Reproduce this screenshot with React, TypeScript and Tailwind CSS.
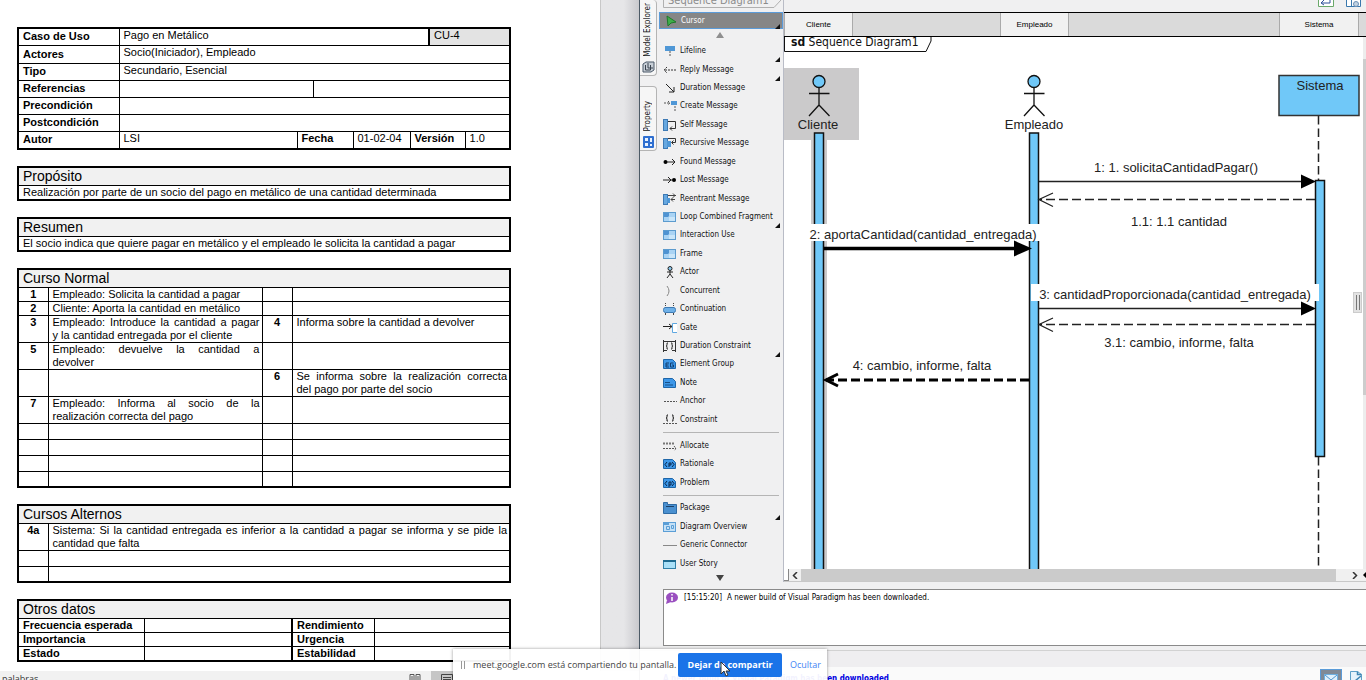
import type { ReactNode } from "react";

const UI_FONT = "font-['DejaVu_Sans_Condensed','DejaVu_Sans',sans-serif]";

/* ---------- Document ---------- */

function Heading({ children, span }: { children: ReactNode; span: number }) {
  return (
    <tr className="h-[18px] border-b border-black bg-[#f1f1f1]">
      <th colSpan={span} className="p-0 pl-1 text-left text-sm leading-4 font-normal">
        {children}
      </th>
    </tr>
  );
}

function DocTable({ cols, children }: { cols: string[]; children: ReactNode }) {
  return (
    <table className="w-full table-fixed border-collapse border-2 border-black text-[11px] leading-[13px]">
      <colgroup>
        {cols.map((c, i) => (
          <col key={i} className={c} />
        ))}
      </colgroup>
      <tbody>{children}</tbody>
    </table>
  );
}

const label = "border border-black p-0 pl-1 text-left align-middle font-bold";
const cell = "border border-black p-0 px-1 align-top";
const num = "border border-black p-0 text-center align-top font-bold";
const just = "border border-black p-0 pl-1 pr-[2px] text-justify align-top";

const steps: { h: string; a?: string; at?: string; b?: string; bt?: string }[] = [
  { h: "h-[14px]", a: "1", at: "Empleado: Solicita la cantidad a pagar" },
  { h: "h-[14px]", a: "2", at: "Cliente: Aporta la cantidad en metálico" },
  {
    h: "h-[27px]",
    a: "3",
    at: "Empleado: Introduce la cantidad a pagar y\u00a0la cantidad entregada por el cliente",
    b: "4",
    bt: "Informa sobre la cantidad a devolver",
  },
  { h: "h-[27px]", a: "5", at: "Empleado: devuelve la cantidad a devolver" },
  { h: "h-[27px]", b: "6", bt: "Se informa sobre la realización correcta del\u00a0pago por parte del socio" },
  { h: "h-[27px]", a: "7", at: "Empleado: Informa al socio de la realización correcta del pago" },
  { h: "h-[16px]" },
  { h: "h-[16px]" },
  { h: "h-[16px]" },
  { h: "h-[16px]" },
];

function Document() {
  return (
    <section className="flex w-[639px] shrink-0 flex-col bg-[#e4e4e6] font-['Liberation_Sans',Arial,sans-serif] text-black">
      <div className="flex min-h-0 flex-1">
        <div className="w-[601px] border-r border-[#c8c8c8] bg-white pt-[27px] pl-[17px]">
          <div className="flex w-[494px] flex-col gap-4">
            <DocTable
              cols={["w-[101px]", "w-[178px]", "w-[16px]", "w-[40px]", "w-[57px]", "w-[19px]", "w-[36px]", "w-[45px]"]}
            >
              <tr className="h-[17px]">
                <th className={label}>Caso de Uso</th>
                <td className={cell} colSpan={5}>
                  Pago en Metálico
                </td>
                <td className="border border-l-2 border-black bg-[#e3e3e3] p-0 pl-1 align-top" colSpan={2}>
                  CU-4
                </td>
              </tr>
              <tr className="h-[18px]">
                <th className={label}>Actores</th>
                <td className={cell} colSpan={7}>
                  Socio(Iniciador), Empleado
                </td>
              </tr>
              <tr className="h-[17px]">
                <th className={label}>Tipo</th>
                <td className={cell} colSpan={7}>
                  Secundario, Esencial
                </td>
              </tr>
              <tr className="h-[17px]">
                <th className={label}>Referencias</th>
                <td className={cell} colSpan={2} />
                <td className={cell} colSpan={5} />
              </tr>
              <tr className="h-[17px]">
                <th className={label}>Precondición</th>
                <td className={cell} colSpan={7} />
              </tr>
              <tr className="h-[17px]">
                <th className={label}>Postcondición</th>
                <td className={cell} colSpan={7} />
              </tr>
              <tr className="h-[18px]">
                <th className={label}>Autor</th>
                <td className={cell}>LSI</td>
                <th className={`${cell} text-left`} colSpan={2}>
                  Fecha
                </th>
                <td className={cell}>01-02-04</td>
                <th className={`${cell} text-left`} colSpan={2}>
                  Versión
                </th>
                <td className={cell}>1.0</td>
              </tr>
            </DocTable>

            <DocTable cols={["w-full"]}>
              <Heading span={1}>Propósito</Heading>
              <tr className="h-[15px]">
                <td className={cell}>
                  Realización por parte de un socio del pago en metálico de una cantidad determinada
                </td>
              </tr>
            </DocTable>

            <DocTable cols={["w-full"]}>
              <Heading span={1}>Resumen</Heading>
              <tr className="h-[15px]">
                <td className={cell}>
                  El socio indica que quiere pagar en metálico y el empleado le solicita la cantidad a pagar
                </td>
              </tr>
            </DocTable>

            <DocTable cols={["w-[30px]", "w-[214px]", "w-[30px]", "w-[218px]"]}>
              <Heading span={4}>Curso Normal</Heading>
              {steps.map((s, i) => (
                <tr key={i} className={s.h}>
                  <td className={num}>{s.a}</td>
                  <td className={just}>{s.at}</td>
                  <td className={num}>{s.b}</td>
                  <td className={just}>{s.bt}</td>
                </tr>
              ))}
            </DocTable>

            <DocTable cols={["w-[30px]", "w-[462px]"]}>
              <Heading span={2}>Cursos Alternos</Heading>
              <tr className="h-[27px]">
                <td className={num}>4a</td>
                <td className={just}>
                  Sistema: Si la cantidad entregada es inferior a la cantidad a pagar se informa y se pide la cantidad
                  que falta
                </td>
              </tr>
              <tr className="h-[16px]">
                <td className={num} />
                <td className={just} />
              </tr>
              <tr className="h-[16px]">
                <td className={num} />
                <td className={just} />
              </tr>
            </DocTable>

            <DocTable cols={["w-[126px]", "w-[148px]", "w-[82px]", "w-[136px]"]}>
              <Heading span={4}>Otros datos</Heading>
              {[
                ["Frecuencia esperada", "Rendimiento"],
                ["Importancia", "Urgencia"],
                ["Estado", "Estabilidad"],
              ].map(([a, b]) => (
                <tr key={a} className="h-[14px]">
                  <th className={label}>{a}</th>
                  <td className={cell} />
                  <th className={`${label} border-l-2`}>{b}</th>
                  <td className={cell} />
                </tr>
              ))}
            </DocTable>
          </div>
        </div>
        <div className="flex-1 bg-linear-to-r from-[#e6e6e8] from-60% to-[#c9c9cd]" />
      </div>
      <div className="flex h-[9px] justify-between overflow-hidden bg-[#f1f1f1] pl-[2px] text-[9px] leading-[15px]">
        <span className="font-['Open_Sans',sans-serif] text-[#333]">palabras</span>
        <div className="mr-[186px] flex gap-[10px]">
          <svg width="12" height="9" className="mt-[3px]" fill="none" stroke="#555">
            <path d="M1 .5h4v8H1zM7 .5h4v8H7zM2 3h2M2 5h2M8 3h2M8 5h2" />
          </svg>
          <div className="w-[22px] bg-[#c6c6c6] pt-[3px] pl-[10px]">
            <svg width="12" height="9" fill="none" stroke="#444">
              <path d="M.5 .5h11v9H.5zM2 3.5h8M2 5.5h8" />
            </svg>
          </div>
        </div>
      </div>
    </section>
  );
}

/* ---------- Palette ---------- */

const blueBox = (
  <>
    <rect x=".5" y="1.5" width="12" height="9" fill="#a9d3f4" stroke="#5c9bce" />
    <path d="M1 2h5v3l-1 1H1z" fill="#4f93d2" />
    <path d="M6 6h6v4H6z" fill="#c9e5f9" />
  </>
);

const noteShape = <path d="M.5 1.5h9l3 3v6H.5z" fill="#3d97e8" stroke="#1f66a8" />;

const icons: Record<string, ReactNode> = {
  Lifeline: (
    <>
      <rect x="2" y="1" width="10" height="5" fill="#4f97d6" />
      <path d="M7 6v5" stroke="#555" strokeDasharray="2 1" />
    </>
  ),
  "Reply Message": (
    <path d="M4 3L1 6l3 3M2 6h12" fill="none" stroke="#333" strokeDasharray="2 1" />
  ),
  "Duration Message": <path d="M3 2l8 8M11 5v5H6" fill="none" stroke="#222" />,
  "Create Message": (
    <>
      <rect x="8" y="1" width="6" height="4" fill="#4f97d6" />
      <path d="M1 3h6M5 1l2 2-2 2M12 6v6" fill="none" stroke="#555" strokeDasharray="2 1" />
    </>
  ),
  "Self Message": (
    <>
      <rect x=".5" y=".5" width="4" height="11" fill="#67a8e0" stroke="#3d7ab5" />
      <path d="M5 2.500h7.500v7H7M9 7.500l-2 2 2 2" fill="none" stroke="#333" />
    </>
  ),
  "Recursive Message": (
    <>
      <rect x=".5" y="1.500" width="4" height="10" fill="#67a8e0" stroke="#3d7ab5" />
      <rect x="4" y="4" width="4" height="6" fill="#4f97d6" />
      <path d="M5 1.500h7.500v4H9M10.500 3.500l-2 2 2 2" fill="none" stroke="#333" />
    </>
  ),
  "Found Message": (
    <>
      <circle cx="2.500" cy="6" r="2" />
      <path d="M4 6h8M9 3l3 3-3 3" fill="none" stroke="#222" />
    </>
  ),
  "Lost Message": (
    <>
      <circle cx="11" cy="6" r="2" />
      <path d="M0 6h9M5 3l3 3-3 3" fill="none" stroke="#222" />
    </>
  ),
  "Reentrant Message": (
    <>
      <rect x=".5" y="1.500" width="4" height="10" fill="#67a8e0" stroke="#3d7ab5" />
      <rect x="4" y="5" width="3" height="5" fill="#4f97d6" />
      <path d="M5 2.500h8M10 .5l2 2-2 2M12 6.500H8M10 4.500l-2 2 2 2" fill="none" stroke="#444" />
    </>
  ),
  "Loop Combined Fragment": blueBox,
  "Interaction Use": blueBox,
  Frame: blueBox,
  Actor: (
    <>
      <circle cx="7" cy="2.500" r="2" fill="#8cc9ee" stroke="#222" />
      <path d="M7 5v3M4 6h6M7 8l-3 4M7 8l3 4" fill="none" stroke="#222" />
    </>
  ),
  Concurrent: <path d="M4 1q4 5 0 10" fill="none" stroke="#888" />,
  Continuation: (
    <>
      <path d="M2.500 0v5M10.500 0v5" stroke="#444" strokeDasharray="1 1" />
      <rect x=".5" y="4.500" width="12" height="5" rx="2" fill="#6fb1e8" stroke="#3d7ab5" />
      <path d="M2.500 10v2M10.500 10v2" stroke="#444" />
    </>
  ),
  Gate: (
    <>
      <path d="M0 4.500h9M6 2l3 2.500L6 7" fill="none" stroke="#222" />
      <path d="M14 1.500H9.500v9H14" fill="#fff" stroke="#5ea7e0" />
    </>
  ),
  "Duration Constraint": (
    <path
      d="M.5 0v12M12.500 0v12M1 1.500h11M1 10.500h3M9 10.500h3M5 3H4v2.500L3 6l1 .5V9h1M8 3h1v2.500l1 .5-1 .5V9H8"
      fill="none"
      stroke="#333"
    />
  ),
  "Element Group": (
    <>
      {noteShape}
      <path d="M6 5H3v4h3M3 7h2.500M10.500 5h-3v4h3V7H9" fill="none" stroke="#123f70" />
    </>
  ),
  Note: (
    <>
      {noteShape}
      <path d="M2 5.500h5M2 8h8" stroke="#174f87" />
    </>
  ),
  Anchor: <path d="M1 6.500h13" stroke="#555" strokeDasharray="2 1" />,
  Constraint: (
    <>
      <path d="M5 1H4v2.500L3 4l1 .5V7h1M9 1h1v2.500l1 .5-1 .5V7H9" fill="none" stroke="#222" />
      <path d="M0 9.500h14" stroke="#555" strokeDasharray="2 1" />
    </>
  ),
  Allocate: (
    <>
      <path d="M0 3.500h11" stroke="#777" strokeWidth="2" strokeDasharray="2 1" />
      <path d="M0 8.500h13M11 6l2 2.500-2 2" fill="none" stroke="#555" strokeDasharray="2 1" />
    </>
  ),
  Rationale: (
    <>
      {noteShape}
      <path d="M4 4L2 6.500 4 9M9 4l2 2.500L9 9M6 9V5h2v2H6" fill="none" stroke="#06254a" />
    </>
  ),
  Problem: (
    <>
      {noteShape}
      <path d="M4 4L2 6.500 4 9M9 4l2 2.500L9 9M6 10V5h2v3H6" fill="none" stroke="#06254a" />
    </>
  ),
  Package: (
    <>
      <path d="M.5 .5h4v2h9v9H.5z" fill="#4a90d0" stroke="#2e6ba5" />
      <path d="M3 4.500h8" stroke="#1b3f66" />
    </>
  ),
  "Diagram Overview": (
    <>
      <rect x=".5" y="1.500" width="12" height="9" fill="#c4e0f6" stroke="#5b9ed6" />
      <path d="M1 2h5v2H1z" fill="#5b9ed6" />
      <path d="M3.500 5.500h3v3h-3zM8.500 4.500h2v3h-2z" fill="none" stroke="#5b9ed6" />
    </>
  ),
  "Generic Connector": <path d="M0 6.500h14" stroke="#888" />,
  "User Story": (
    <>
      <rect x=".5" y="2.500" width="12" height="8" fill="#a9e0f8" stroke="#3180a8" />
      <path d="M0 3h13" stroke="#1d6a90" strokeWidth="2" />
    </>
  ),
};

const withMenu = ["Lifeline", "Reply Message", "Loop Combined Fragment", "Duration Constraint", "Package"];

const groupA = [
  "Lifeline",
  "Reply Message",
  "Duration Message",
  "Create Message",
  "Self Message",
  "Recursive Message",
  "Found Message",
  "Lost Message",
  "Reentrant Message",
  "Loop Combined Fragment",
  "Interaction Use",
  "Frame",
  "Actor",
  "Concurrent",
  "Continuation",
  "Gate",
  "Duration Constraint",
  "Element Group",
  "Note",
  "Anchor",
  "Constraint",
];
const groupB = ["Allocate", "Rationale", "Problem"];
const groupC = ["Package", "Diagram Overview", "Generic Connector", "User Story"];

function Tools({ names, height }: { names: string[]; height: string }) {
  return (
    <ul className={`flex flex-col ${height}`}>
      {names.map((n) => (
        <li key={n} className="relative flex-1">
          <button type="button" className="flex h-full w-full items-center gap-[3px] pl-1 whitespace-nowrap">
            <svg width="14" height="12" className="shrink-0">
              {icons[n]}
            </svg>
            {n}
          </button>
          {withMenu.includes(n) && (
            <svg width="5" height="5" className="absolute right-[3px] -bottom-[2px]">
              <path d="M5 0v5H0z" fill="#111" />
            </svg>
          )}
        </li>
      ))}
    </ul>
  );
}

function Palette() {
  return (
    <div className="flex w-[125px] shrink-0 flex-col border-r border-[#b9bcc6] text-[8px] leading-3 text-[#111]">
      <div className="relative h-3 overflow-hidden">
        <div className="flex h-2 items-end pl-[9px] text-[11px] leading-[14px] whitespace-nowrap text-[#8b8b8b]">
          Sequence Diagram1
        </div>
        <svg width="120" height="8" className="absolute top-0 left-1" fill="none" stroke="#b0b0b0">
          <path d="M.5 0v7.500H111l7-7.500" />
        </svg>
      </div>
      <div className="relative">
        <button
          type="button"
          className="flex h-[17px] w-full items-center gap-[5px] border border-[#5b9bd8] bg-[#868686] pl-[6px] text-white"
        >
          <svg width="10" height="12">
            <path d="M1 1l9 6-5 1-3 3z" fill="#3fae49" stroke="#1f7a2b" />
          </svg>
          Cursor
        </button>
        <svg width="5" height="5" className="absolute right-[3px] bottom-0">
          <path d="M5 0v5H0z" fill="#111" />
        </svg>
      </div>
      <svg width="8" height="6" className="mt-[3px] mb-[4px] ml-[57px]">
        <path d="M4 0l4 6H0z" fill="#8f8f8f" />
      </svg>
      <Tools names={groupA} height="h-[387px]" />
      <hr className="mt-[3px] mb-1 ml-1 w-[116px] border-[#b5b5b5]" />
      <Tools names={groupB} height="h-[55px]" />
      <hr className="my-[3px] ml-1 w-[116px] border-[#b5b5b5]" />
      <Tools names={groupC} height="h-[74px]" />
      <svg width="8" height="6" className="mt-[2px] ml-[57px]">
        <path d="M0 0h8L4 6z" fill="#444" />
      </svg>
    </div>
  );
}

function SideTabs() {
  const tab =
    "flex w-[17px] flex-col items-center justify-end gap-1 rounded-r border border-l-0 border-[#b4b4b4] bg-[#f6f6f6] text-[8px] leading-3 text-[#111]";
  return (
    <div className="flex w-[19px] shrink-0 flex-col gap-[10px]">
      <button type="button" className={`${tab} h-[76px] border-t-0 pb-[2px]`}>
        <span className="rotate-180 whitespace-nowrap [writing-mode:vertical-rl]">Model Explorer</span>
        <svg width="13" height="12" className="shrink-0">
          <path d="M1 3l3-2h8v8l-3 2H1z" fill="#c7ced6" stroke="#4b5868" />
          <path d="M3.500 4v5h5V4M6 2v5h5" fill="none" stroke="#39424e" />
        </svg>
      </button>
      <button type="button" className={`${tab} h-[65px] pb-[1px]`}>
        <span className="rotate-180 whitespace-nowrap [writing-mode:vertical-rl]">Property</span>
        <svg width="13" height="14" className="shrink-0">
          <rect x="1" y="1" width="11" height="12" rx="1" fill="#2f6fd0" />
          <path d="M3 3h3v3H3zM8 3h2v4H8zM3 8h3v3H3zM8 9h2v2H8z" fill="#e8f2ff" />
        </svg>
      </button>
    </div>
  );
}

/* ---------- Sequence diagram ---------- */

function StickFigure({ x }: { x: number }) {
  return (
    <g stroke="#111" strokeWidth="1.300" fill="none">
      <circle cx={x} cy="44.500" r="6" fill="#70c8f8" />
      <path d={`M${x} 51v17M${x - 10} 56.500h20.500M${x} 68l-10 11M${x} 68l10.500 11`} />
    </g>
  );
}

function Diagram() {
  return (
    <svg
      className="block h-full w-full min-w-0 font-['Liberation_Sans',Arial,sans-serif] text-[13px]"
      fill="#222"
      textAnchor="middle"
    >
      <path d="M.5 0v14.500H142L147 4V0" fill="#fff" stroke="#111" />
      <text x="7" y="9" textAnchor="start" className={`${UI_FONT} text-xs`} fill="#111">
        <tspan fontWeight="bold">sd</tspan> Sequence Diagram1
      </text>

      <rect x="0" y="31" width="75" height="72" fill="#cbcacb" />
      <rect x="27" y="95" width="16" height="100%" fill="#cbcacb" />
      <StickFigure x={35} />
      <StickFigure x={250} />
      <text x="34" y="92">Cliente</text>
      <text x="250" y="92">Empleado</text>
      <g fill="#70c8f8" stroke="#111" strokeWidth="1.500">
        <rect x="30.500" y="96" width="9" height="100%" />
        <rect x="245.500" y="96" width="9" height="100%" />
      </g>

      <path d="M534.500 79V143M534.500 420V560" stroke="#222" strokeWidth="1.500" strokeDasharray="8.500 4" />
      <rect x="495" y="38.500" width="80" height="40" fill="#70c8f8" stroke="#333" strokeWidth="1.500" />
      <text x="536" y="53">Sistema</text>
      <rect x="531.500" y="143.500" width="9" height="276" fill="#70c8f8" stroke="#111" strokeWidth="1.500" />

      <rect x="27" y="187" width="229" height="17" fill="#fff" />
      <rect x="247" y="247" width="288" height="17" fill="#fff" />

      <g stroke="#222" fill="none" strokeWidth="1.300">
        <path d="M255 144.500h264M255 271.500h264" />
        <path d="M531 162.500H256M531 287.500H256" strokeDasharray="9 4" />
        <path d="M269 156l-14 6.500 14 7M269 281l-14 6.500 14 7" />
      </g>
      <path d="M517 137.500l15 7-15 7zM517 264.500l15 7-15 7z" fill="#000" />

      <path d="M40 211.500h192" stroke="#000" strokeWidth="3.500" />
      <path d="M230 203.500l18 8-18 8z" fill="#000" />
      <path d="M245 343H42" stroke="#000" strokeWidth="3" strokeDasharray="9 4" />
      <path d="M54 337l-12 6 12 6" stroke="#000" strokeWidth="3" fill="none" />

      <text x="392" y="135">1: 1. solicitaCantidadPagar()</text>
      <text x="395" y="189">1.1: 1.1 cantidad</text>
      <text x="139" y="202">2: aportaCantidad(cantidad_entregada)</text>
      <text x="391" y="262">3: cantidadProporcionada(cantidad_entregada)</text>
      <text x="395" y="310">3.1: cambio, informe, falta</text>
      <text x="138" y="333">4: cambio, informe, falta</text>
    </svg>
  );
}

function HeadCell({ children, w }: { children: ReactNode; w: string }) {
  return <div className={`${w} flex shrink-0 items-center justify-center border-x border-[#aaa] bg-[#f1f1f1]`}>{children}</div>;
}

function Canvas() {
  return (
    <div className="flex min-w-0 flex-1 flex-col">
      <div className="flex h-3 items-start justify-end gap-[10px] overflow-hidden pr-[3px]">
        <svg width="18" height="8">
          <path d="M1.500 0v6.500h15V0" fill="#fff" stroke="#6aa86a" />
          <path d="M5 3h8V0M7 0L4 3l3 2" fill="none" stroke="#2f4f9a" />
        </svg>
        <svg width="18" height="8">
          <path d="M1.500 0v6.500h14V0M6.500 0v6" fill="#fff" stroke="#3a78ad" />
          <circle cx="11" cy="4" r="2.500" fill="#c3d3e2" stroke="#6a8fb5" />
        </svg>
      </div>
      <div className="flex h-[25px] shrink-0 overflow-hidden border-y border-black bg-[#dadada] font-['Liberation_Sans',Arial,sans-serif] text-[8px] font-medium text-black">
        <HeadCell w="w-[69px]">Cliente</HeadCell>
        <div className="w-[147px]" />
        <HeadCell w="w-[69px]">Empleado</HeadCell>
        <div className="flex-1" />
        <HeadCell w="w-20">Sistema</HeadCell>
        <div className="w-[7px]" />
      </div>
      <div className="flex min-h-0 flex-1 bg-white">
        <div className="relative min-w-0 flex-1">
          <Diagram />
          <div className="absolute top-[255px] right-[1px] flex h-[21px] w-[9px] justify-center gap-[2px] border border-[#ccc] bg-[#e2e2e2] py-[2px]">
            <span className="w-px bg-[#777]" />
            <span className="w-px bg-[#777]" />
          </div>
        </div>
        <div className="w-[3px] bg-[#ededed] pt-[22px]">
          <div className="h-[336px] bg-[#cdcdcd]" />
        </div>
      </div>
      <div className="flex h-[13px] shrink-0 items-stretch border-b border-[#c8c8c8] bg-[#f0f0f0]">
        <div className="w-[5px] border-r border-b border-[#888] bg-white" />
        <button type="button" aria-label="Scroll left" className="flex w-3 items-center justify-center">
          <svg width="6" height="7" fill="none" stroke="#333">
            <path d="M5 0L1.500 3.500 5 7" strokeWidth="1.500" />
          </svg>
        </button>
        <div className="flex-1 bg-[#cbcbcb]" />
        <button type="button" aria-label="Scroll right" className="flex w-[30px] items-center justify-end gap-[5px]">
          <svg width="6" height="7" fill="none" stroke="#333">
            <path d="M1 0l3.500 3.500L1 7" strokeWidth="1.500" />
          </svg>
          <svg width="3" height="6">
            <path d="M3 0v6L0 3z" />
          </svg>
        </button>
      </div>
    </div>
  );
}

function Modeler() {
  return (
    <section className={`flex min-w-0 flex-1 flex-col border-l border-[#4c5a66] bg-[#f0f0f1] ${UI_FONT}`}>
      <div className="flex min-h-0 flex-1">
        <SideTabs />
        <Palette />
        <Canvas />
      </div>
      <div className="mt-[7px] ml-[23px] flex h-[57px] shrink-0 items-start gap-[5px] border border-r-0 border-[#8a8a8a] bg-white pt-[2px] pl-[1px] text-[8px] leading-3 text-black">
        <svg width="14" height="12">
          <ellipse cx="7" cy="5.500" rx="6" ry="5" fill="#9a4fc0" />
          <path d="M2 8l-1 4 5-2z" fill="#9a4fc0" />
          <path d="M7 2v1.500M7 5v4" stroke="#fff" strokeWidth="1.500" />
        </svg>
        <span>[15:15:20]</span>
        <span>A newer build of Visual Paradigm has been downloaded.</span>
      </div>
      <div className="mt-1 h-[17px] shrink-0 border-t border-[#d2d2d2] bg-[#efeef0]" />
      <div className="flex h-[13px] shrink-0 items-start justify-between overflow-hidden bg-[#fafafa] pl-[23px]">
        <span className="pt-[6px] text-[8px] leading-3 font-bold whitespace-nowrap text-[#0000e0]">
          A newer build of Visual Paradigm has been downloaded
        </span>
        <div className="flex items-start gap-2 pt-[2px]">
          <div className="flex h-4 w-[22px] justify-center border border-[#5b9bd8] bg-[#808a96] pt-1">
            <svg width="14" height="10">
              <rect x=".5" y=".5" width="13" height="9" fill="#dff0fb" stroke="#6fb0e0" />
              <path d="M1 1l6 5 6-5" fill="none" stroke="#4f94cc" />
            </svg>
          </div>
          <svg width="14" height="14" className="mt-[2px] mr-[2px]">
            <path d="M.5 .5h7l4 3v10H.5z" fill="#e6f3fb" stroke="#5fa0c8" />
            <path d="M7.500 .5v3h4M5 10l6-5" fill="none" stroke="#3f86b4" strokeWidth="1.500" />
          </svg>
        </div>
      </div>
    </section>
  );
}

/* ---------- Screen-sharing bar ---------- */

function ShareBar() {
  return (
    <div className="absolute bottom-0 left-[453px] flex h-[31px] w-[374px] items-center bg-white/95 pl-2 font-['Open_Sans',sans-serif] text-[9px] shadow-[0_0_3px_rgba(0,0,0,0.4)]">
      <div className="flex h-2 gap-[2px]">
        <span className="w-px bg-[#999]" />
        <span className="w-px bg-[#999]" />
      </div>
      <span className="ml-2 w-[205px] whitespace-nowrap text-[#444]">
        meet.google.com está compartiendo tu pantalla.
      </span>
      <button
        type="button"
        className="relative h-6 w-[104px] rounded-[2px] bg-[#1a73e8] font-bold whitespace-nowrap text-white"
      >
        Dejar de compartir
        <svg width="12" height="16" className="absolute top-2 left-[42px]">
          <path d="M1 1v12l3-3 2 5 2-1-2-4h4z" fill="#fff" stroke="#333" />
        </svg>
      </button>
      <button type="button" className="ml-2 text-[#4285f4]">
        Ocultar
      </button>
    </div>
  );
}

export default function App() {
  return (
    <main className="relative flex h-screen w-full overflow-hidden bg-white">
      <Document />
      <Modeler />
      <ShareBar />
    </main>
  );
}
